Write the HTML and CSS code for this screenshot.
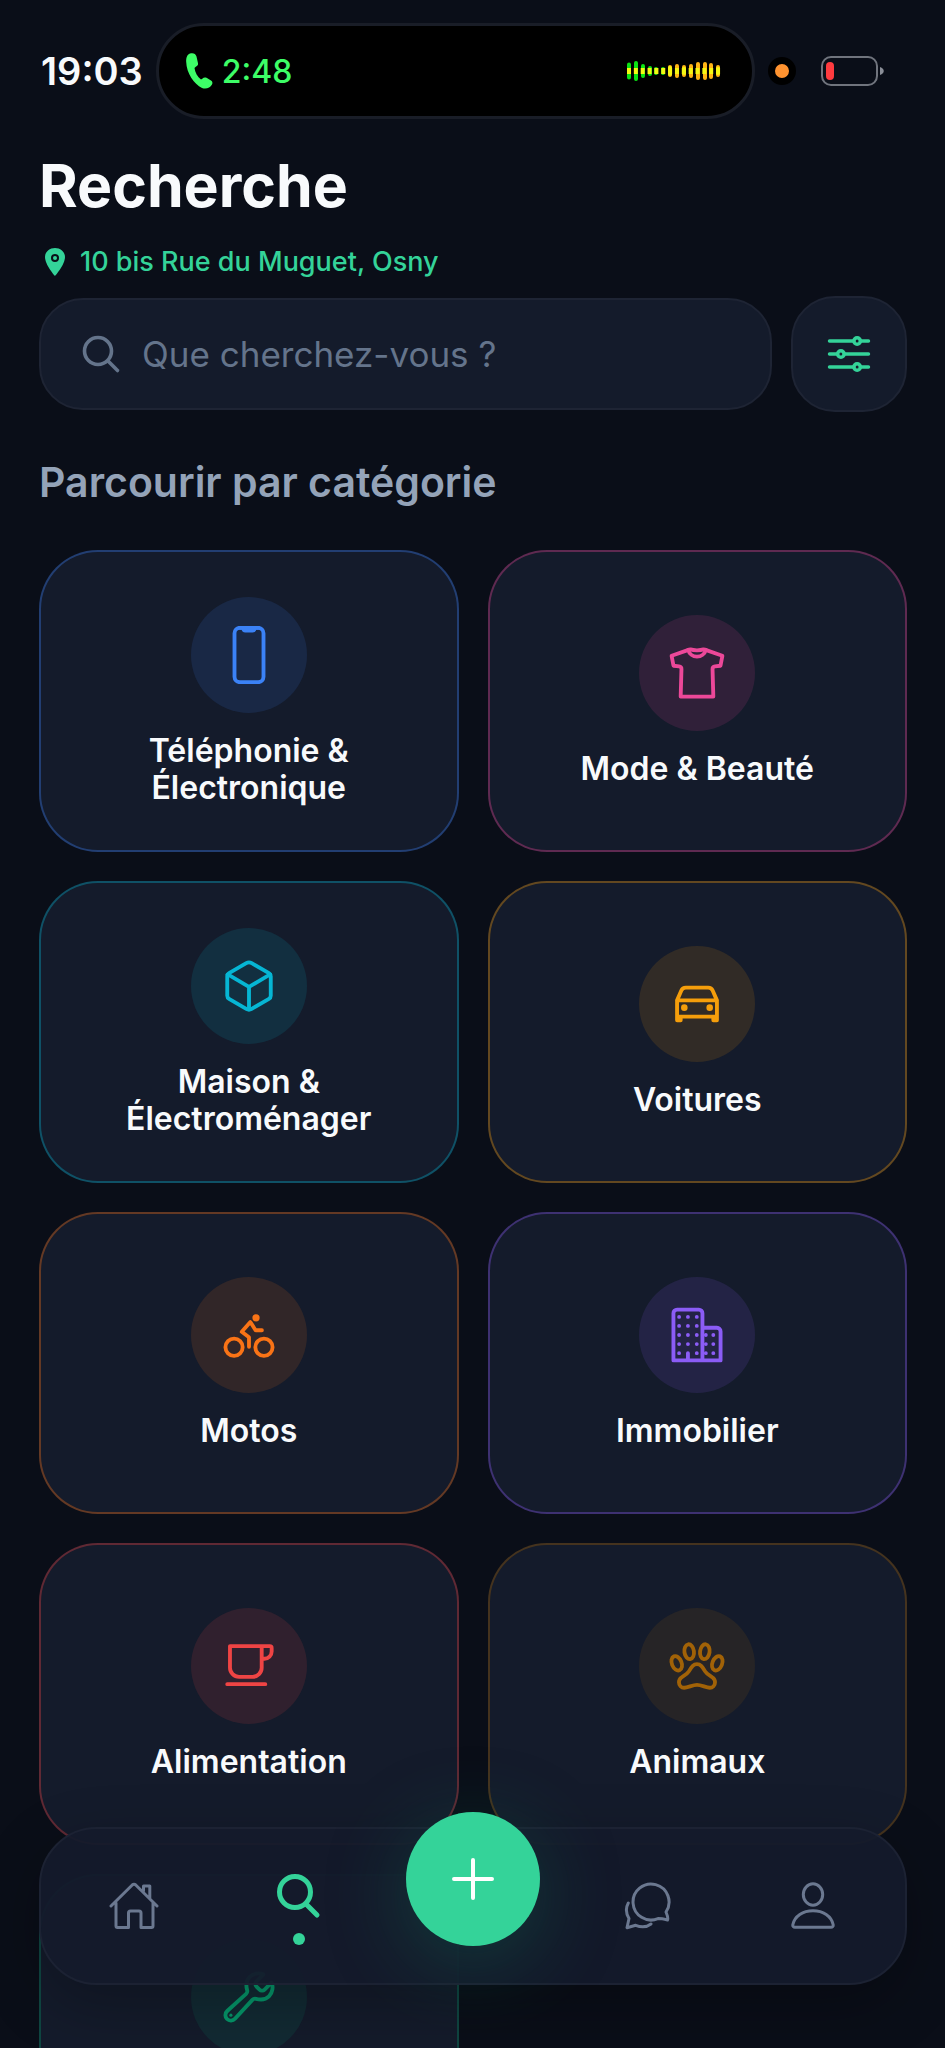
FILE: index.html
```html
<!DOCTYPE html>
<html lang="fr">
<head>
<meta charset="UTF-8" />
<meta name="viewport" content="width=device-width, initial-scale=1" />
<title>Recherche</title>
<link rel="stylesheet" href="styles.css">
</head>
<body>

<div class="status-bar">
  <span class="time">19:03</span>
  <div class="island">
    <svg class="call-icon" viewBox="0 0 28 38"><path d="M5 1.500C2 2.500 1 6 1.200 10C1.500 21 9 32 17 36C21 37.500 25 36 27 32.500C27.800 31 27.500 29.500 26 28.500L21.500 25.800C20 25 18.500 25.400 17.300 26.700L16 27.500C12.500 25 10 20.500 9.500 16L10.800 14.800C12.500 14 13.300 13 13 11.300L11.500 4.500C10.800 1.500 8 .5 5 1.500Z"/></svg>
    <span class="duration">2:48</span>
    <svg class="wave" viewBox="0 0 94 20">
      <g stroke-width="4" stroke-linecap="round">
        <path stroke="#0be314" d="M2 3.500v13M9 2v16M16 5v10M23 7v6M29 8v4M36 8v4"/>
        <path stroke="#ffb515" d="M43 6v8M50 5v10M57 6v8M64 5v10M71 3v14M78 3v14M84 4v12M91 6v8"/>
        <path stroke="#f4f713" d="M43 7v6M57 8v4M91 8v4"/>
      </g>
      <path stroke="#f4f713" stroke-width="6" stroke-dasharray="4 2.850" d="M0 10h94"/>
    </svg>
  </div>
  <span class="mic-dot"></span>
  <svg class="battery" viewBox="0 0 64 32">
    <rect x="1" y="2" width="55" height="28" rx="9" fill="none" stroke="#70747d" stroke-width="2"/>
    <rect x="5" y="7" width="8" height="18" rx="4" fill="#ff3b3f"/>
    <path d="M59 12c5 1.500 5 6.500 0 8z" fill="#8a8e97"/>
  </svg>
</div>

<main class="page">
  <h1>Recherche</h1>
  <a class="location" href="#">
    <svg viewBox="0 0 512 512"><path fill-rule="evenodd" d="M256 32C167.670 32 96 96.510 96 176c0 128 160 304 160 304s160-176 160-304c0-79.490-71.670-144-160-144zm0 224a64 64 0 1164-64 64.070 64.070 0 01-64 64z"/><circle cx="256" cy="192" r="32"/></svg>
    10 bis Rue du Muguet, Osny
  </a>

  <form class="search-row">
    <label class="search-box">
      <svg class="icon" viewBox="0 0 512 512"><circle cx="221" cy="221" r="157"/><path d="M338 338l110 110"/></svg>
      <input type="text" placeholder="Que cherchez-vous ?" aria-label="Que cherchez-vous ?">
    </label>
    <button type="button" class="filter-btn" aria-label="Filtres">
      <svg class="icon" viewBox="0 0 512 512"><path d="M368 128h80M64 128h240M368 384h80M64 384h240M208 256h240M64 256h80"/><circle cx="336" cy="128" r="32"/><circle cx="176" cy="256" r="32"/><circle cx="336" cy="384" r="32"/></svg>
    </button>
  </form>

  <h2>Parcourir par catégorie</h2>

  <div class="grid">
    <button class="card blue">
      <span class="bubble"><svg class="icon" viewBox="0 0 512 512"><rect x="128" y="16" width="256" height="480" rx="48"/><path d="M176 16h24a8 8 0 018 8 16 16 0 0016 16h64a16 16 0 0016-16 8 8 0 018-8h24"/></svg></span>
      <span class="label">Téléphonie &amp;<br>Électronique</span>
    </button>

    <button class="card pink">
      <span class="bubble"><svg class="icon" viewBox="0 0 512 512"><path d="M314.560 48s-22.780 8-58.560 8-58.560-8-58.560-8a31.940 31.940 0 00-10.570 1.800L32 104l16.630 88 48.880 5.520a24 24 0 0121.290 24.580L112 464h288l-6.800-241.900a24 24 0 0121.290-24.580L463.370 192 480 104 325.130 49.800a31.940 31.940 0 00-10.570-1.800z"/><path d="M333.310 52.660a80 80 0 01-154.620 0"/></svg></span>
      <span class="label">Mode &amp; Beauté</span>
    </button>

    <button class="card cyan">
      <span class="bubble"><svg class="icon" viewBox="0 0 512 512"><path d="M448 341.370V170.610A32 32 0 00432.110 143l-152-88.460a47.940 47.940 0 00-48.240 0L79.890 143A32 32 0 0064 170.610v170.760A32 32 0 0079.890 369l152 88.460a48 48 0 0048.240 0l152-88.460A32 32 0 00448 341.370z"/><path d="M69 154l187 110 187-110M256 464V264"/></svg></span>
      <span class="label">Maison &amp;<br>Électroménager</span>
    </button>

    <button class="card amber">
      <span class="bubble"><svg class="icon" viewBox="0 0 512 512"><path d="M80 224l37.780-88.150C123.930 121.500 139.600 112 157.110 112h197.780c17.510 0 33.180 9.500 39.330 23.850L432 224M80 224h352v144H80zM112 368v32H80v-32M432 368v32h-32v-32"/><circle class="solid" cx="144" cy="288" r="29"/><circle class="solid" cx="368" cy="288" r="29"/></svg></span>
      <span class="label">Voitures</span>
    </button>

    <button class="card orange">
      <span class="bubble"><svg class="icon" viewBox="0 0 512 512"><circle cx="388" cy="364" r="76"/><circle cx="124" cy="364" r="76"/><path d="M256 360v-84l-64-48 76-86 46 72h56"/><circle class="solid" cx="318" cy="104" r="32"/></svg></span>
      <span class="label">Motos</span>
    </button>

    <button class="card violet">
      <span class="bubble"><svg class="icon" viewBox="0 0 512 512"><path d="M176 416v64M80 32h192a32 32 0 0132 32v412a4 4 0 01-4 4H48V64a32 32 0 0132-32zM320 192h112a32 32 0 0132 32v256H304V208a16 16 0 0116-16z"/><path d="M98 96h0M98 176h0M98 256h0M98 336h0M98 416h0M176 96h0M176 176h0M176 256h0M176 336h0M254 96h0M254 176h0M254 256h0M254 336h0M254 416h0M334 256h0M334 336h0M334 416h0M400 256h0M400 336h0M400 416h0"/></svg></span>
      <span class="label">Immobilier</span>
    </button>

    <button class="card red">
      <span class="bubble"><svg class="icon" viewBox="0 0 512 512"><path d="M88 80h280v192a80 80 0 01-80 80H168a80 80 0 01-80-80zM368 80h72a16 16 0 0116 16v32a64 64 0 01-64 64h-24M64 416h336"/></svg></span>
      <span class="label">Alimentation</span>
    </button>

    <button class="card brown">
      <span class="bubble"><svg class="icon" viewBox="0 0 512 512"><path d="M327.600 303.480C299.800 257.350 287.800 240 256 240s-43.900 17.460-71.700 63.480c-23.800 39.360-71.900 42.640-83.900 76.070a50.910 50.910 0 00-3.600 19c0 27.190 20.800 49.440 46.400 49.440 31.800 0 75.100-25.390 112.900-25.390S337 448 368.800 448c25.600 0 46.300-22.250 46.300-49.440a51 51 0 00-3.700-19c-12-33.430-60-36.710-83.800-76.080z"/><ellipse cx="187" cy="130" rx="42" ry="66" transform="rotate(-8 187 130)"/><ellipse cx="325" cy="130" rx="42" ry="66" transform="rotate(8 325 130)"/><ellipse cx="77" cy="232" rx="43" ry="66" transform="rotate(-22 77 232)"/><ellipse cx="435" cy="232" rx="43" ry="66" transform="rotate(22 435 232)"/></svg></span>
      <span class="label">Animaux</span>
    </button>

    <button class="card green" aria-label="Services">
      <span class="bubble"><svg class="icon" viewBox="0 0 512 512"><path d="M393.870 190a32.100 32.100 0 01-45.250 0l-26.570-26.570a32.090 32.090 0 010-45.260L382.190 58a1 1 0 00-.3-1.640c-38.820-16.640-89.150-8.160-121.110 23.570-30.580 30.350-32.320 76-21.120 115.840a31.930 31.930 0 01-9.060 32.080L64 380a48.170 48.170 0 1068 68l153.860-167a31.930 31.930 0 0131.600-9.130c39.540 10.590 84.540 8.600 114.720-21.190 32.490-32 39.500-88.560 23.750-120.930a1 1 0 00-1.600-.26z"/><circle class="solid" cx="96" cy="416" r="14"/></svg></span>
      <span class="label"></span>
    </button>
  </div>
</main>

<nav class="tab-bar">
  <a href="#" class="tab" aria-label="Accueil">
    <svg viewBox="0 0 50 48"><path d="M2 24L23 3.200q2-1.800 4 0L48 24M7 21v23q0 1.500 1.500 1.500H19.500V31q0-2 2-2h8.500q2 0 2 2v14.500H42.500q1.500 0 1.500-1.500V21M34.500 9V4h6.300v12"/></svg>
  </a>
  <a href="#" class="tab active" aria-label="Recherche">
    <svg viewBox="0 0 50 48"><circle cx="21" cy="20" r="15.500"/><path d="M32 32l11 11"/></svg>
    <span class="dot"></span>
  </a>
  <div class="add-slot">
    <button class="add-btn" aria-label="Ajouter">
      <svg viewBox="0 0 44 44"><path d="M22 3v38M3 22h38"/></svg>
    </button>
  </div>
  <a href="#" class="tab" aria-label="Messages">
    <svg viewBox="-1 0 50 48"><path d="M42 30A18 18 0 1 0 34 36.600Q37 36.500 43.500 38Q44.500 36 42 30ZM4.300 21C1.500 26 2 31.500 5 36.500L3 45.700 11.700 43.300C17 45.500 23 45 27 42"/></svg>
  </a>
  <a href="#" class="tab" aria-label="Profil">
    <svg viewBox="-3 0 50 48"><ellipse cx="22" cy="12.500" rx="9.700" ry="10.700"/><path d="M4 45.300h36c1.500 0 2.500-1 2.200-2.500C40.500 34 32 28.700 22 28.700S3.500 34 1.800 42.800c-.3 1.500.7 2.500 2.200 2.500z"/></svg>
  </a>
</nav>

</body>
</html>
```

FILE: styles.css
```css
* {
  box-sizing: border-box;
}
body {
  margin: 0;
  height: 100vh;
  overflow: hidden;
  background: #0a0e18;
  color: #f8fafc;
  font-family: Inter, "Liberation Sans", sans-serif;
}
button, input {
  font-family: inherit;
  color: inherit;
}
a {
  text-decoration: none;
}
.icon {
  fill: none;
  stroke: currentColor;
  stroke-width: 34;
  stroke-linecap: round;
  stroke-linejoin: round;
}
.icon .solid {
  fill: currentColor;
  stroke: none;
}

/* status bar */
.status-bar {
  display: flex;
  align-items: center;
  gap: 13px;
  padding: 23px 60px 0 41px;
}
.time {
  font-size: 38px;
  line-height: 46px;
  font-weight: 600;
}
.island {
  flex: 1;
  display: flex;
  align-items: center;
  height: 96px;
  padding: 0 31px 0 26px;
  border: 3px solid #191d27;
  border-radius: 48px;
  background: #000;
}
.call-icon {
  width: 28px;
  height: 38px;
  fill: #3dfd67;
}
.duration {
  margin-left: 9px;
  font-size: 32px;
  font-weight: 500;
  color: #3dfd67;
}
.wave {
  width: 94px;
  height: 20px;
  margin-left: auto;
}
.mic-dot {
  width: 28px;
  height: 28px;
  border: 7px solid #000;
  border-radius: 50%;
  background: #ff9330;
}
.battery {
  width: 64px;
  height: 32px;
  margin-left: 12px;
}

/* header */
.page {
  padding: 31px 38px 0 39px;
}
h1 {
  margin: 0 0 24px;
  font-size: 59px;
  line-height: 72px;
  font-weight: 700;
}
.location {
  display: flex;
  align-items: center;
  gap: 9px;
  font-size: 27px;
  line-height: 32px;
  font-weight: 500;
  color: #34d399;
}
.location svg {
  width: 32px;
  height: 32px;
  fill: currentColor;
}
.search-row {
  display: flex;
  align-items: center;
  gap: 19px;
  margin: 18px 0 45px;
}
.search-box {
  flex: 1;
  display: flex;
  align-items: center;
  gap: 19px;
  height: 112px;
  padding: 0 38px;
  border: 2px solid #1e2434;
  border-radius: 44px;
  background: #141b2b;
  color: #64748b;
}
.search-box .icon {
  width: 44px;
  height: 44px;
  stroke-width: 42;
}
.search-box input {
  flex: 1;
  min-width: 0;
  padding: 0;
  border: none;
  outline: none;
  background: none;
  font-size: 35px;
}
.search-box input::placeholder {
  color: #64748b;
  opacity: 1;
}
.filter-btn {
  display: grid;
  place-items: center;
  width: 116px;
  height: 116px;
  padding: 0;
  border: 2px solid #1e2434;
  border-radius: 44px;
  background: #141b2b;
  color: #34d399;
}
.filter-btn .icon {
  width: 52px;
  height: 52px;
}
h2 {
  margin: 0 0 43px;
  font-size: 41px;
  line-height: 50px;
  font-weight: 600;
  color: #94a3b8;
}

/* categories */
.grid {
  display: grid;
  grid-template-columns: repeat(2, 1fr);
  gap: 29px;
}
.card {
  display: flex;
  flex-direction: column;
  align-items: center;
  justify-content: center;
  gap: 19px;
  height: 302px;
  padding: 0 30px;
  border: 2px solid rgb(from var(--accent) r g b / 0.35);
  border-radius: 59px;
  background: #141b2b;
}
.bubble {
  display: grid;
  place-items: center;
  width: 116px;
  height: 116px;
  border-radius: 50%;
  background: rgb(from var(--accent) r g b / 0.13);
  color: var(--accent);
}
.bubble .icon {
  width: 58px;
  height: 58px;
}
.label {
  min-height: 37px;
  font-size: 32px;
  line-height: 37px;
  font-weight: 600;
}
.blue { --accent: #3b82f6; }
.pink { --accent: #ec4899; }
.cyan { --accent: #06b6d4; }
.amber { --accent: #f59e0b; }
.orange { --accent: #f97316; }
.violet { --accent: #8b5cf6; }
.red { --accent: #ef4444; }
.brown { --accent: #a16207; }
.green { --accent: #059669; }

/* bottom navigation */
.tab-bar {
  position: fixed;
  left: 39px;
  right: 38px;
  bottom: 63px;
  display: flex;
  align-items: center;
  height: 158px;
  padding: 0 10px;
  border: 2px solid #1c2233;
  border-radius: 58px;
  background: rgba(20, 26, 43, 0.95);
  box-shadow: 0 20px 60px rgba(0, 0, 0, 0.25);
}
.tab {
  flex: 1;
  display: flex;
  flex-direction: column;
  align-items: center;
  gap: 13px;
  color: #6b7890;
}
.tab svg {
  width: 50px;
  height: 48px;
  fill: none;
  stroke: currentColor;
  stroke-width: 3;
  stroke-linecap: round;
  stroke-linejoin: round;
}
.tab.active {
  padding-top: 4px;
  color: #34d399;
}
.tab.active svg {
  stroke-width: 5;
}
.dot {
  width: 12px;
  height: 12px;
  border-radius: 50%;
  background: currentColor;
}
.add-slot {
  display: flex;
  justify-content: center;
  width: 184px;
  padding-bottom: 54px;
}
.add-btn {
  display: grid;
  place-items: center;
  width: 134px;
  height: 134px;
  padding: 0;
  border: none;
  border-radius: 50%;
  background: #34d399;
  color: #fff;
  box-shadow: 0 16px 80px rgba(16, 120, 90, 0.35);
}
.add-btn svg {
  width: 44px;
  height: 44px;
  fill: none;
  stroke: currentColor;
  stroke-width: 4;
  stroke-linecap: round;
}
```
